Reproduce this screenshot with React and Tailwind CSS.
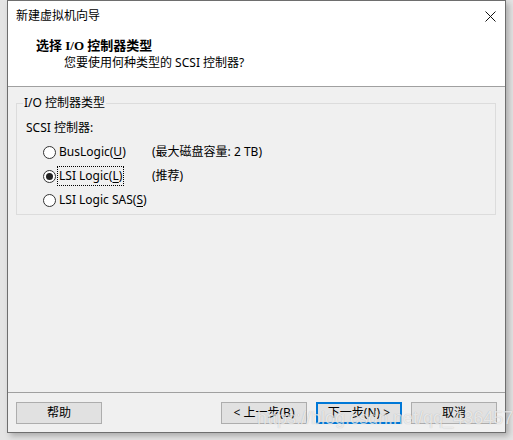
import React from 'react';

const ui = "font-['Noto_Sans','Noto_Sans_CJK_SC',sans-serif]";

function Radio({ checked }) {
  return (
    <span className="w-[13px] h-[13px] rounded-full border border-[#333] bg-white flex items-center justify-center shrink-0">
      {checked && <span className="w-[7px] h-[7px] rounded-full bg-[#222]" />}
    </span>
  );
}

function Option({ label, hotkey, checked, focused, note }) {
  return (
    <div className="h-[24px] flex items-center pl-[17px]">
      <Radio checked={checked} />
      <div className="w-[96px] pl-[2px] flex">
        <span className={focused ? 'px-px outline outline-1 outline-dotted outline-black' : 'px-px'}>
          {label}(<span className="underline underline-offset-2">{hotkey}</span>)
        </span>
      </div>
      {note && <span>{note}</span>}
    </div>
  );
}

function Button({ children, primary }) {
  return (
    <button
      className={
        'w-[86px] h-[22px] bg-[#e1e1e1] text-[12px] leading-none flex items-center justify-center ' +
        (primary ? 'border-2 border-[#0078d7]' : 'border border-[#adadad]')
      }
    >
      {children}
    </button>
  );
}

export default function App() {
  return (
    <div className={`w-[513px] h-[440px] bg-[#e4e4e4] pl-[7px] text-[12px] text-black relative ${ui}`}>
      <div className="w-[499px] h-[433px] border border-[#6e6e6e] bg-[#f0f0f0] flex flex-col shadow-[3px_3px_6px_rgba(0,0,0,0.25)]">
        {/* header */}
        <div className="bg-white h-[85px] flex flex-col">
          <div className="h-[30px] flex items-center justify-between pl-[8px] pr-[9px]">
            <span>新建虚拟机向导</span>
            <svg width="11" height="11" viewBox="0 0 11 11" stroke="#111" strokeWidth="1">
              <line x1="0.5" y1="0.5" x2="10.5" y2="10.5" />
              <line x1="10.5" y1="0.5" x2="0.5" y2="10.5" />
            </svg>
          </div>
          <div className="pl-[28px] pt-[6px] font-bold text-[13px] leading-[17px] font-['Liberation_Serif','Noto_Sans_CJK_SC',serif]">
            选择 I/O 控制器类型
          </div>
          <div className="pl-[56px] leading-[17px]">您要使用何种类型的 SCSI 控制器?</div>
        </div>
        <div className="h-px bg-[#a0a0a0]" />

        {/* body */}
        <div className="flex-1 pt-[8px] pl-[8px] pr-[9px]">
          <fieldset className="border border-[#dcdcdc] h-[120px] pb-[2px]">
            <legend className="ml-[6px] px-px leading-[16px]">I/O 控制器类型</legend>
            <div className="pl-[9px]">
              <div className="h-[24px] flex items-center mt-[5px]">SCSI 控制器:</div>
              <Option label="BusLogic" hotkey="U" note="(最大磁盘容量: 2 TB)" />
              <Option label="LSI Logic" hotkey="L" checked focused note="(推荐)" />
              <Option label="LSI Logic SAS" hotkey="S" />
            </div>
          </fieldset>
        </div>

        <div className="h-px bg-[#a0a0a0]" />
        <div className="h-[39px] flex items-start pt-[9px] pl-[8px] pr-[8px]">
          <Button>帮助</Button>
          <div className="flex-1" />
          <div className="flex gap-[9px]">
            <Button>&lt; 上一步(B)</Button>
            <Button primary>下一步(N) &gt;</Button>
            <Button>取消</Button>
          </div>
        </div>
      </div>

      {/* csdn watermark */}
      <div className="absolute left-[257px] top-[405px] text-[18px] text-white/70 font-['Liberation_Sans',sans-serif] [text-shadow:0_0_1px_rgba(0,0,0,0.25)] pointer-events-none">
        https://blog.csdn.net/qq_43645782
      </div>
    </div>
  );
}
